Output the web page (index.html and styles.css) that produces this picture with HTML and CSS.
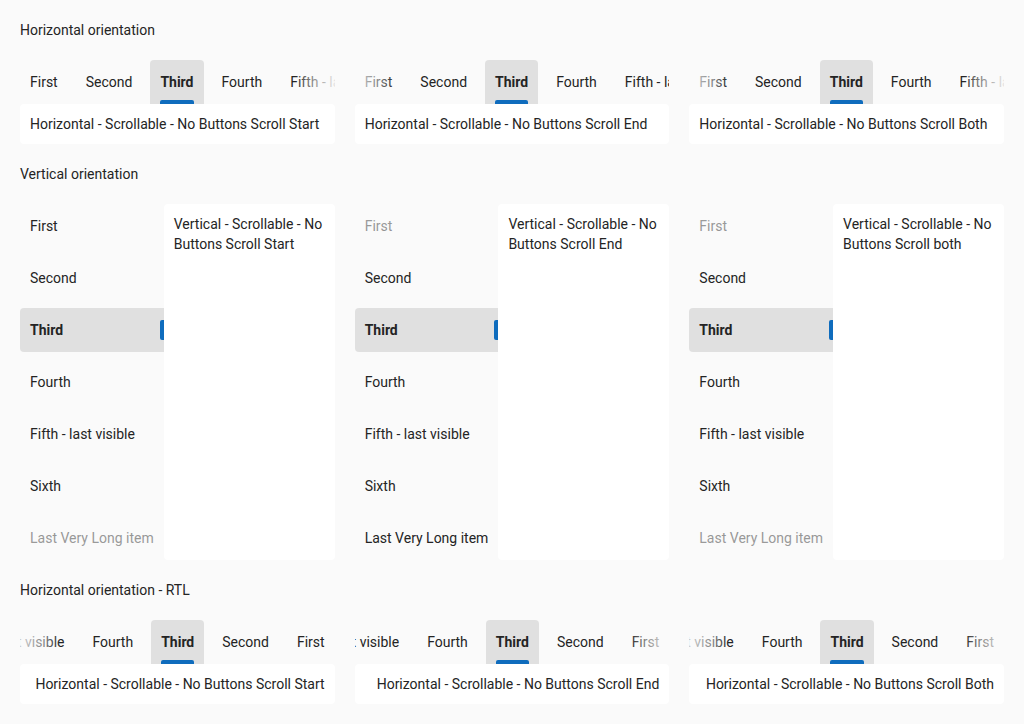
FILE: index.html
```html
<!DOCTYPE html>
<html lang="en">
<head>
<meta charset="utf-8">
<title>Tabs</title>
<link rel="stylesheet" href="styles.css">
</head>
<body>
<h2 class="title">Horizontal orientation</h2>
<div class="row">
  <div class="htabs">
    <div class="tablist">
      <div class="tab">First</div><div class="tab">Second</div><div class="tab sel">Third</div><div class="tab">Fourth</div><div class="tab">Fifth - last visible</div><div class="tab">Sixth</div><div class="tab">Last Very Long item</div>
      <span class="fade fade-right"></span>
    </div>
    <div class="panel">Horizontal - Scrollable - No Buttons Scroll Start</div>
  </div>
  <div class="htabs">
    <div class="tablist">
      <div class="tab">First</div><div class="tab">Second</div><div class="tab sel">Third</div><div class="tab">Fourth</div><div class="tab">Fifth - last visible</div><div class="tab">Sixth</div><div class="tab">Last Very Long item</div>
      <span class="fade fade-left"></span>
    </div>
    <div class="panel">Horizontal - Scrollable - No Buttons Scroll End</div>
  </div>
  <div class="htabs">
    <div class="tablist">
      <div class="tab">First</div><div class="tab">Second</div><div class="tab sel">Third</div><div class="tab">Fourth</div><div class="tab">Fifth - last visible</div><div class="tab">Sixth</div><div class="tab">Last Very Long item</div>
      <span class="fade fade-left"></span><span class="fade fade-right"></span>
    </div>
    <div class="panel">Horizontal - Scrollable - No Buttons Scroll Both</div>
  </div>
</div>

<h2 class="title">Vertical orientation</h2>
<div class="row">
  <div class="vtabs">
    <div class="vlist">
      <div class="vtab">First</div><div class="vtab">Second</div><div class="vtab sel">Third</div><div class="vtab">Fourth</div><div class="vtab">Fifth - last visible</div><div class="vtab">Sixth</div><div class="vtab">Last Very Long item</div>
      <span class="vfade vfade-bottom"></span>
    </div>
    <div class="vpanel">Vertical - Scrollable - No Buttons Scroll Start</div>
  </div>
  <div class="vtabs">
    <div class="vlist">
      <div class="vtab">First</div><div class="vtab">Second</div><div class="vtab sel">Third</div><div class="vtab">Fourth</div><div class="vtab">Fifth - last visible</div><div class="vtab">Sixth</div><div class="vtab">Last Very Long item</div>
      <span class="vfade vfade-top"></span>
    </div>
    <div class="vpanel">Vertical - Scrollable - No Buttons Scroll End</div>
  </div>
  <div class="vtabs">
    <div class="vlist">
      <div class="vtab">First</div><div class="vtab">Second</div><div class="vtab sel">Third</div><div class="vtab">Fourth</div><div class="vtab">Fifth - last visible</div><div class="vtab">Sixth</div><div class="vtab">Last Very Long item</div>
      <span class="vfade vfade-top"></span><span class="vfade vfade-bottom"></span>
    </div>
    <div class="vpanel">Vertical - Scrollable - No Buttons Scroll both</div>
  </div>
</div>

<h2 class="title">Horizontal orientation - RTL</h2>
<div class="row">
  <div class="htabs" dir="rtl">
    <div class="tablist">
      <div class="tab">First</div><div class="tab">Second</div><div class="tab sel">Third</div><div class="tab">Fourth</div><div class="tab">Fifth - last visible</div><div class="tab">Sixth</div><div class="tab">Last Very Long item</div>
      <span class="fade fade-left"></span>
    </div>
    <div class="panel">Horizontal - Scrollable - No Buttons Scroll Start</div>
  </div>
  <div class="htabs" dir="rtl">
    <div class="tablist">
      <div class="tab">First</div><div class="tab">Second</div><div class="tab sel">Third</div><div class="tab">Fourth</div><div class="tab">Fifth - last visible</div><div class="tab">Sixth</div><div class="tab">Last Very Long item</div>
      <span class="fade fade-right"></span>
    </div>
    <div class="panel">Horizontal - Scrollable - No Buttons Scroll End</div>
  </div>
  <div class="htabs" dir="rtl">
    <div class="tablist">
      <div class="tab">First</div><div class="tab">Second</div><div class="tab sel">Third</div><div class="tab">Fourth</div><div class="tab">Fifth - last visible</div><div class="tab">Sixth</div><div class="tab">Last Very Long item</div>
      <span class="fade fade-left"></span><span class="fade fade-right"></span>
    </div>
    <div class="panel">Horizontal - Scrollable - No Buttons Scroll Both</div>
  </div>
</div>
</body>
</html>
```
FILE: styles.css
```css
* { box-sizing: border-box; }
html, body { margin: 0; }
body {
  padding: 20px;
  background: #fafafa;
  font-family: Roboto, "Liberation Sans", sans-serif;
  font-size: 14px;
  line-height: 20px;
  color: #242424;
}
.title {
  margin: 0 0 20px;
  font-size: 14px;
  font-weight: 400;
  line-height: 20px;
}
.row {
  display: grid;
  grid-template-columns: repeat(3, 1fr);
  column-gap: 20px;
  margin-bottom: 20px;
}
.htabs { min-width: 0; }
.tablist {
  position: relative;
  display: flex;
  gap: 8px;
  overflow: hidden;
  height: 44px;
}
.tab {
  position: relative;
  flex: 0 0 auto;
  display: flex;
  align-items: center;
  height: 44px;
  padding: 0 10px;
  white-space: nowrap;
  border-radius: 4px 4px 0 0;
}
.tab.sel {
  background: #e0e0e0;
  font-weight: 700;
}
.tab.sel::after {
  content: "";
  position: absolute;
  left: 10px;
  right: 10px;
  bottom: 0;
  height: 4px;
  border-radius: 2px 2px 0 0;
  background: #0f6cbd;
}
.fade {
  position: absolute;
  top: 0;
  bottom: 0;
  width: 40px;
}
.fade-left {
  left: 0;
  background: linear-gradient(to right, rgba(250,250,250,0.8), rgba(250,250,250,0.45) 60%, rgba(250,250,250,0));
}
.fade-right {
  right: 0;
  background: linear-gradient(to left, rgba(250,250,250,0.9), rgba(250,250,250,0.45) 60%, rgba(250,250,250,0));
}
.panel {
  background: #fff;
  border-radius: 4px;
  padding: 10px;
  white-space: nowrap;
  overflow: hidden;
}
.vtabs {
  display: grid;
  grid-template-columns: auto 1fr;
  min-width: 0;
}
.vlist {
  position: relative;
  display: flex;
  flex-direction: column;
  gap: 8px;
}
.vtab {
  position: relative;
  display: flex;
  align-items: center;
  height: 44px;
  padding: 0 10px;
  white-space: nowrap;
  border-radius: 4px 0 0 4px;
}
.vtab.sel {
  background: #e0e0e0;
  font-weight: 700;
}
.vtab.sel::after {
  content: "";
  position: absolute;
  right: 0;
  top: 12px;
  bottom: 12px;
  width: 4px;
  border-radius: 2px 0 0 2px;
  background: #0f6cbd;
}
.vfade {
  position: absolute;
  left: 0;
  right: 0;
  height: 44px;
}
.vfade-top {
  top: 0;
  background: linear-gradient(to bottom, rgba(250,250,250,0.6), rgba(250,250,250,0.5) 80%, rgba(250,250,250,0));
}
.vfade-bottom {
  bottom: 0;
  background: linear-gradient(to top, rgba(250,250,250,0.6), rgba(250,250,250,0.5) 80%, rgba(250,250,250,0));
}
.vpanel {
  background: #fff;
  border-radius: 4px;
  padding: 10px;
  min-width: 0;
}
```
